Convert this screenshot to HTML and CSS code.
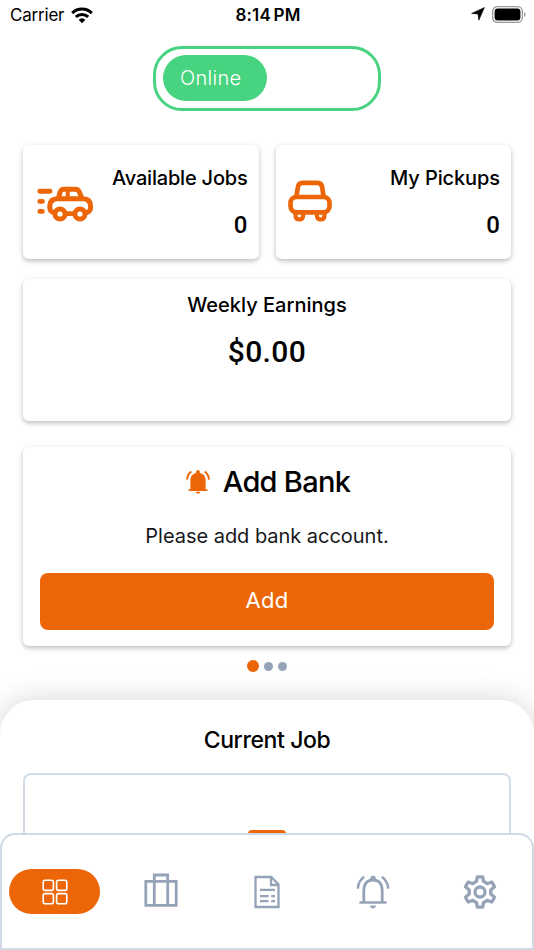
FILE: index.html
```html
<!DOCTYPE html>
<html lang="en">
<head>
<meta charset="utf-8">
<title>Dashboard</title>
<link rel="stylesheet" href="styles.css">
</head>
<body>
<div class="screen">
  <header class="status">
    <div class="status-left">
      <span class="carrier">Carrier</span>
      <svg class="wifi" viewBox="0 0 22 17" width="22" height="17"><g fill="none" stroke="#000" stroke-width="3"><path d="M1.2 6.1a14 14 0 0 1 19.6 0"/><path d="M4.8 9.9a9 9 0 0 1 12.4 0"/></g><path d="M7.6 12.8a5 5 0 0 1 6.800 0L11 16.200z"/></svg>
    </div>
    <span class="time">8:14 PM</span>
    <div class="status-right">
      <svg viewBox="0 0 14 14" width="14" height="14"><path d="M13.400.6 7.800 13.200 7 7 .6 6.400z" stroke="#000" stroke-width=".6" stroke-linejoin="round"/></svg>
      <svg viewBox="0 0 34 17" width="34" height="17"><rect x=".7" y=".7" width="29.600" height="15.600" rx="4.600" fill="none" stroke="#999" stroke-width="1.300"/><rect x="2.600" y="2.600" width="25.800" height="11.800" rx="3"/><path d="M32 6v5q1.600-.8 1.600-2.500T32 6z" fill="#999"/></svg>
    </div>
  </header>

  <main class="content">
    <div class="toggle"><span class="toggle-thumb">Online</span></div>

    <section class="stats">
      <article class="card stat">
        <svg class="fast-car" viewBox="0 0 56 36" width="57" height="36" preserveAspectRatio="none" fill="none" stroke="#ec6608" stroke-width="4.900" stroke-linecap="round" stroke-linejoin="round"><path d="M2.800 5.300h10M2.800 15.400h2.400M2.800 25.400h2.400"/><path d="M21 12.500l1.600-6q.8-3.300 4-3.300h11.200q2.600 0 3.600 2.400l2.800 6.900"/><path d="M30.200 4v8" stroke-width="4"/><path d="M16.500 26.600q-4-.6-4-5.800 0-8 7.600-8h25q7.600 0 7.600 8 0 5.200-4 5.800M28 27.600h8"/><circle cx="22.600" cy="28" r="5" stroke-width="4.800"/><circle cx="42.200" cy="28" r="5" stroke-width="4.800"/></svg>
        <div class="stat-text"><h2 class="label jobs">Available Jobs</h2><p class="count">0</p></div>
      </article>
      <article class="card stat">
        <svg class="car" viewBox="0 0 44 42" width="44" height="42" fill="none" stroke="#ec6608" stroke-width="4.700" stroke-linejoin="round"><path d="M8.400 16.500l1.500-9.500q.7-4.100 4.600-4.100h15q3.900 0 4.600 4.100l1.500 9.500"/><rect x="2.500" y="17" width="39" height="15.300" rx="6"/><path d="M7.500 33v2.200q0 4.300 3.800 4.300t3.800-4.300V33M28.900 33v2.200q0 4.300 3.800 4.300t3.800-4.300V33" stroke-width="4.200"/></svg>
        <div class="stat-text"><h2 class="label pickups">My Pickups</h2><p class="count">0</p></div>
      </article>
    </section>

    <section class="card earnings">
      <h2 class="label weekly">Weekly Earnings</h2>
      <p class="amount">$0.00</p>
    </section>

    <section class="card bank">
      <div class="bank-head">
        <svg viewBox="0 0 24 24" width="24" height="24" fill="#ec6608"><path d="M2.600 19.200h1.800V10q0-5.200 5.700-6.900V2a1.900 1.900 0 0 1 3.800 0v1.100q5.700 1.700 5.700 6.900v9.200h1.800v1.700H2.600zM9.800 21.800h4.400q-.3 1.900-2.200 1.900t-2.200-1.900z"/><path d="M1.100 9.600q.2-5 4.200-8M22.900 9.600q-.2-5-4.200-8" fill="none" stroke="#ec6608" stroke-width="1.900"/></svg>
        <h2 class="bank-title">Add Bank</h2>
      </div>
      <p class="bank-note">Please add bank account.</p>
      <button class="add">Add</button>
    </section>

    <div class="dots"><i class="dot active"></i><i class="dot"></i><i class="dot"></i></div>

    <section class="sheet">
      <h2 class="current">Current Job</h2>
      <div class="job"><div class="job-icon"></div></div>
    </section>
  </main>

  <nav class="nav">
    <a class="tab selected"><svg viewBox="0 0 26 26" width="26" height="26" fill="none" stroke="#fff" stroke-width="1.600"><rect x="1.200" y="1.200" width="10.200" height="10.200" rx="2"/><rect x="14.600" y="1.200" width="10.200" height="10.200" rx="2"/><rect x="1.200" y="14.600" width="10.200" height="10.200" rx="2"/><rect x="14.600" y="14.600" width="10.200" height="10.200" rx="2"/></svg></a>
    <a class="tab"><svg class="case" viewBox="0 0 34 34" width="34" height="34" fill="none" stroke="#94a3b8" stroke-width="2.800"><path d="M1.800 8.300h30.400v24H1.800zM10.300 32V2h13.400v30"/></svg></a>
    <a class="tab"><svg viewBox="0 0 26 34" width="26" height="34" fill="none" stroke="#94a3b8" stroke-width="2.300"><path d="M1.500 2h15.800l7.200 7.400V32h-23z"/><path d="M17 2v8h8M6 14.800h15M6 21.200h8.600M17.200 21.200H21M6 26.200h8.600M17.200 26.200H21"/></svg></a>
    <a class="tab"><svg viewBox="0 0 34 34" width="34" height="34" fill="none" stroke="#94a3b8" stroke-width="2.800"><path d="M7.800 27V15.200C7.800 8.500 11.600 5 17 5s9.200 3.500 9.200 10.200V27"/><path d="M3.400 27.600h27.200M1.800 13.600q.4-7.200 6.300-11.800M32.200 13.600q-.4-7.200-6.300-11.800" stroke-width="2.500"/><path d="M14.200 5V3.600a2.800 2.800 0 0 1 5.600 0V5zM14 30.500h6q-.6 2.900-3 2.900t-3-2.900z" fill="#94a3b8" stroke="none"/></svg></a>
    <a class="tab"><svg viewBox="-17 -17 34 34" width="34" height="34" fill="none" stroke="#94a3b8" stroke-width="3.300" stroke-linejoin="round"><path d="M-3.400-10.700-2.700-15.200H2.700L3.400-10.700Q5-10 7.100-8.300L11.800-10 14.600-5.200 10.700-2Q11 0 10.700 2L14.600 5.200 11.800 10 7.100 8.300Q5 10 3.400 10.700L2.700 15.200H-2.700L-3.400 10.700Q-5 10-7.100 8.300L-11.800 10-14.600 5.200-10.700 2Q-11 0-10.700-2L-14.600-5.200-11.800-10-7.100-8.300Q-5-10-3.400-10.700z"/><circle r="5"/></svg></a>
  </nav>
</div>
</body>
</html>
```
FILE: styles.css
```css
* { box-sizing: border-box; margin: 0; padding: 0; }
body { background: #fff; color: #000; font-family: Inter, "Liberation Sans", sans-serif; }
h2 { font-weight: 500; }
svg { display: block; flex: none; }

.screen { width: 534px; height: 950px; overflow: hidden; display: flex; flex-direction: column; }

.status { height: 30px; display: grid; grid-template-columns: 1fr auto 1fr; align-items: center; padding: 0 8px 0 10px; flex: none; }
.status-left { display: flex; align-items: center; gap: 7px; }
.carrier { font-size: 17px; letter-spacing: -0.2px; }
.time { font-size: 17px; font-weight: 600; letter-spacing: 0.2px; word-spacing: -2px; }
.status-right { display: flex; align-items: center; justify-content: flex-end; gap: 7px; margin-bottom: 2px; }

.content { height: 803px; flex: none; overflow: hidden; display: flex; flex-direction: column; }
.toggle { flex: none; align-self: center; margin-top: 16px; width: 228px; height: 65px; border: 3px solid #47d37f; border-radius: 29px; padding: 6px 7px; }
.toggle-thumb { display: flex; align-items: center; width: 104px; height: 46px; padding-left: 17px; border-radius: 23px; background: #47d37f; color: #fff; font-size: 20px; font-weight: 300; letter-spacing: 0.3px; }

.card { flex: none; background: #fff; border-radius: 6px; box-shadow: 0 2px 5px rgba(0, 0, 0, 0.27); }
.stats { flex: none; display: grid; grid-template-columns: 1fr 1fr; gap: 17px; margin: 34px 23px 0; }
.stat { height: 114px; display: flex; justify-content: space-between; padding: 0 11px 0 12px; }
.fast-car { margin: 41px 0 0 2px; }
.car { margin: 35px 0 0 0; }
.stat-text { display: flex; flex-direction: column; align-items: flex-end; padding-top: 20px; }
.label { font-size: 20px; line-height: 26px; white-space: nowrap; }
.jobs { letter-spacing: -0.2px; }
.pickups { letter-spacing: -0.1px; }
.count { font-family: Roboto, sans-serif; font-size: 24px; font-weight: 500; line-height: 30px; margin-top: 19px; }

.earnings { margin: 20px 23px 0; height: 142px; padding-top: 13px; text-align: center; }
.amount { font-size: 30px; line-height: 36px; font-weight: 500; font-family: Roboto, sans-serif; letter-spacing: 0.4px; margin-top: 16px; }

.bank { margin: 26px 23px 0; height: 199px; padding: 15px 17px 0; }
.bank-head { display: flex; justify-content: center; align-items: center; gap: 13px; height: 40px; padding-left: 2px; }
.bank-title { font-size: 29px; line-height: 40px; letter-spacing: -0.700px; }
.bank-note { margin-top: 20px; text-align: center; font-size: 20px; line-height: 28px; color: #18181b; letter-spacing: -0.030px; }
.add { display: block; width: 100%; height: 57px; margin-top: 22.500px; padding-bottom: 2px; border: 0; border-radius: 8px; background: #ec6608; color: #fff; font: 400 22px Inter, sans-serif; letter-spacing: 0.3px; }

.dots { flex: none; display: flex; justify-content: center; align-items: center; gap: 5px; height: 12px; margin-top: 14px; }
.dot { width: 9px; height: 9px; border-radius: 50%; background: #94a3b8; }
.active { width: 12px; height: 12px; background: #ec6608; }

.sheet { flex: none; height: 180px; margin-top: 28px; padding: 25px 23px 0; border-radius: 34px 34px 0 0; background: #fff; box-shadow: 0 0 30px rgba(0, 0, 0, 0.17); }
.current { text-align: center; font-size: 23px; line-height: 30px; letter-spacing: -0.4px; }
.job { height: 150px; margin-top: 18px; padding-top: 55px; border: 2px solid #d3dde8; border-radius: 8px; }
.job-icon { width: 38px; height: 30px; margin: 0 auto; border: 4px solid #ec6608; border-radius: 4px; }

.nav { flex: none; height: 117px; display: grid; grid-template-columns: repeat(5, 91px); justify-content: space-between; padding: 34px 7px 0; border: 2px solid #d0dae6; border-radius: 15px 15px 0 0; background: #fff; }
.tab { height: 45px; display: flex; align-items: center; justify-content: center; }
.selected { border-radius: 23px; background: #ec6608; }
.case { margin-bottom: 3px; }
```
